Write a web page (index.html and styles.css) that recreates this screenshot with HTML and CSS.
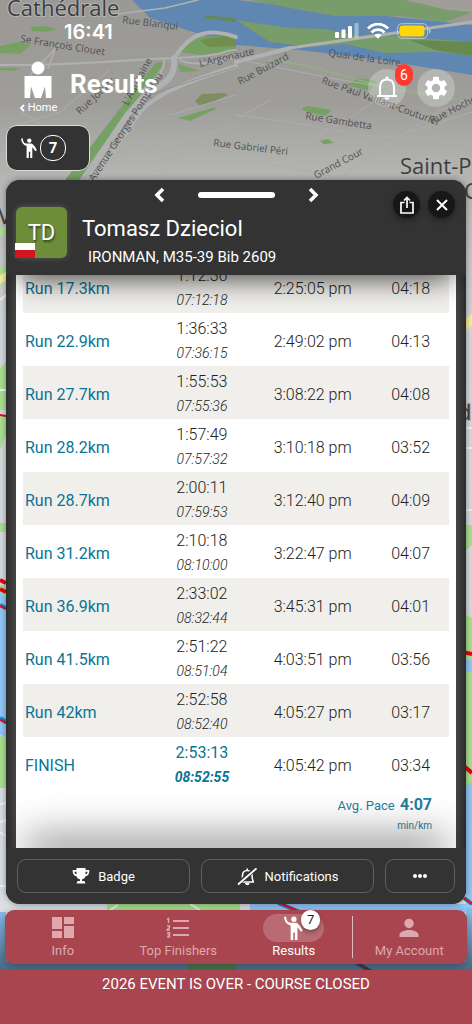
FILE: index.html
```html
<!DOCTYPE html>
<html lang="en">
<head>
<meta charset="utf-8">
<meta name="viewport" content="width=device-width, initial-scale=1">
<title>Results</title>
<link rel="stylesheet" href="styles.css">
</head>
<body>
<div class="app">
  <svg class="map" viewBox="0 0 472 1024" preserveAspectRatio="xMidYMin slice" aria-hidden="true">
    <defs>
      <linearGradient id="ground" x1="0" y1="0" x2="0" y2="1">
        <stop offset="0" stop-color="#9b9996"/><stop offset=".1" stop-color="#9e9d9a"/>
        <stop offset=".18" stop-color="#b7b8b5"/><stop offset=".32" stop-color="#d3d8dc"/>
        <stop offset="1" stop-color="#dbe0e4"/>
      </linearGradient>
      <linearGradient id="shade" x1="0" y1="0" x2="0" y2="1">
        <stop offset="0" stop-color="#1c2a38" stop-opacity="0"/><stop offset="1" stop-color="#1c2a38" stop-opacity=".6"/>
      </linearGradient>
    </defs>
    <rect width="472" height="1024" fill="url(#ground)"/>
    <path fill="#5f87b1" d="M132 0H236L472 25V75L380 60 300 50 236 45 190 31 150 18Z"/>
    <path fill="#789c6a" d="M251 0H472V12L445 22 400 16 335 16 290 8Z"/>
    <path fill="#a19d98" d="M405 0H472V12L447 10Z"/>
    <path fill="#789c6a" d="M236 20 290 28 325 29 360 36 372 34 420 38 472 42V56L440 52 385 53 345 44 310 47 270 42Z"/>
    <path fill="#67894f" d="M410 40 472 42V56L435 50ZM205 15 236 19V22L205 18Z"/>
    <g fill="#76a064">
      <path d="M31 27 45 26 58 29 45 32 32 31ZM0 46 18 42 31 45 20 54 0 53ZM0 68 20 68 14 71 0 70ZM178 52 198 37 236 35V52L200 55ZM178 64 200 71 180 72ZM178 118 212 108 218 108 190 121ZM302 108 308 106 332 110 325 116 304 111ZM320 141 328 139 334 143 324 144ZM346 85 358 78 376 81 370 91ZM62 184 78 184 122 120 165 62 157 62 145 76 88 150Z"/>
    </g>
    <path fill="#70843f" opacity=".65" d="M195 101 202 94 225 93 228 95 215 101 200 106ZM200 40 225 36 236 40V46L208 47Z"/>
    <g fill="none" stroke="#b0b1b2" stroke-linecap="round">
      <path stroke-width="2" d="M0 65C70 66 120 60 175 58S220 50 236 50"/>
      <path stroke-width="4" d="M174 58C180 50 188 38 202 34M236 62 290 48"/>
      <path stroke-width="6" d="M80 184 128 114 148 92C166 84 176 76 174 58"/>
      <path stroke-width="2" d="M140 92C152 82 164 74 164 61M180 60C190 66 210 64 236 58"/>
      <path stroke-width="4" d="M92 184 136 118C150 96 180 84 236 66"/>
      <path stroke-width="4" d="M202 34C212 31 226 33 236 37"/>
      <path stroke-width="3" d="M236 62 290 48 472 22"/>
      <path stroke-width="1.500" d="M110 15 165 8 198 0M30 75 55 49M48 68 55 49"/>
      <path stroke-width="1" stroke="#adadac" d="M0 130 60 112 110 70M20 112 48 128M150 150 236 125M170 115 236 95M160 175 200 130M110 160 150 145 175 170M236 115 290 122 360 135 472 142M270 100 240 117M310 140 350 118 390 90M340 178 400 135 472 112M380 150 440 110 472 100M250 160 330 175M240 60 330 78 472 102M420 115 440 140 472 145"/>
      <path stroke-width="2" stroke="#94ac88" d="M270 60C330 65 380 95 472 100"/>
    </g>
    <path fill="none" stroke="#919394" d="M86 184 132 115 150 95C176 86 200 78 236 67"/>
    <g class="map-street">
      <text transform="translate(122 23) rotate(7)">Rue Blanqui</text>
      <text transform="translate(20 42) rotate(9)">Se François Clouet</text>
      <text transform="translate(200 67) rotate(-13)">L'Argonaute</text>
      <text transform="translate(80 115) rotate(-43)">Rue Joliver</text>
      <text transform="translate(128 106) rotate(-62)">L'Aquitaine</text>
      <text transform="translate(94 182) rotate(-57)">Avenue Georges Pompidou</text>
      <text transform="translate(328 56) rotate(8)">Quai de la Loire</text>
      <text transform="translate(240 85) rotate(-28)">Rue Buizard</text>
      <text transform="translate(321 83) rotate(20)">Rue Paul Vaillant-Couturier</text>
      <text transform="translate(305 119) rotate(9)">Rue Gambetta</text>
      <text transform="translate(213 146) rotate(7)">Rue Gabriel Péri</text>
      <text transform="translate(316 179) rotate(-28)">Grand Cour</text>
      <text transform="translate(432 124) rotate(-27)">Rue Hoche</text>
    </g>
    <g class="map-town">
      <text x="7" y="16">Cathédrale</text>
      <text x="400" y="174">Saint-P</text>
      <text x="464" y="199">C</text>
      <text x="-2" y="224">V</text>
      <text x="458" y="420">d</text>
    </g>
    <path fill="#a9e08f" d="M0 229 6 226V232L0 236ZM0 268 6 264V278L0 286ZM0 368 6 362V410H0ZM0 416H6V434L0 450ZM0 523H6V532H0ZM0 585H6V595H0ZM0 735 6 738V788H0ZM466 525H472V545L466 550ZM466 615 472 618V786H466ZM107 904H240V912H107Z"/>
    <path fill="#f3ee9c" d="M0 275 6 272V280L0 284ZM466 318 472 314V326L466 330Z"/>
    <path fill="#91c6f7" d="M0 592 6 597V738L0 734ZM466 660H472V672H466ZM466 786 472 782V980H466ZM250 904H472V912H250ZM0 912H6V1024H0Z"/>
    <path fill="#87bce9" d="M0 912H6V980H0ZM466 908H472V980H466ZM0 962H472V980H0Z"/>
    <path fill="#7fc466" d="M185 962H236V974H190Z"/>
    <path fill="none" stroke="#e8000b" stroke-width="4" d="M0 580 6 583M0 589 6 592M462 652 472 654M464 766 472 773"/>
    <path fill="none" stroke="#1483c4" stroke-width="4" d="M0 605 6 608M0 718 6 722M464 898 472 904M278 903 300 912M355 962 375 974"/>
    <path fill="none" stroke="#e01020" stroke-width="2" d="M0 415 6 416M0 606 6 609M0 720 6 723M464 898 472 904M280 903 300 912M356 962 376 974"/>
    <path fill="none" stroke="#eef1f4" stroke-width="2" d="M0 300 6 295M0 390H6M0 804 6 803M0 822 6 820M0 832 6 836M0 886H6M110 910 118 905M190 904 200 910M466 428H472M466 448H472M466 510H472"/>
    <rect y="912" width="472" height="62" fill="url(#shade)"/>
  </svg>

  <div class="status">
    <span class="clock">16:41</span>
    <svg class="status-icons" width="96" height="18" viewBox="0 0 96 18" aria-hidden="true">
      <g fill="#fff"><rect y="9" width="4" height="6" rx="1"/><rect x="6.500" y="6.500" width="4" height="8.500" rx="1"/><rect x="13" y="3" width="4" height="12" rx="1"/><rect x="19.500" y="0" width="4" height="15" rx="1" opacity=".4"/></g>
      <g fill="none" stroke="#fff" stroke-width="2.800"><path d="M33 5.500C38.500-.3 47.500-.3 53 5.500M36.500 9.500C40 5.600 46 5.600 49.500 9.500"/></g>
      <path fill="#fff" d="M39.500 12.200C41.500 10.300 44.500 10.300 46.500 12.200L43 15.800Z"/>
      <rect x="62.500" y=".7" width="30" height="14.600" rx="4.500" fill="none" stroke="#d6d9dc" stroke-opacity=".75"/>
      <rect x="64.500" y="2.500" width="25" height="11" rx="3" fill="#ffd60a"/>
      <path fill="#d6d9dc" opacity=".8" d="M94 5.500C96 6 96 10 94 10.500Z"/>
    </svg>
  </div>

  <header class="topbar">
    <a class="home" href="#home">
      <svg width="28" height="38" viewBox="0 0 28 38" aria-hidden="true"><circle cx="14" cy="7" r="6.500" fill="#fff"/><path fill="#fff" d="M.5 15H27.500V37H22L21 25.500 17 37H11L7 25.500 6 37H.5Z"/></svg>
      <span class="home-label"><svg width="6" height="8" viewBox="0 0 6 8" aria-hidden="true"><path d="M5 1 2 4 5 7" fill="none" stroke="#fff" stroke-width="1.800"/></svg>Home</span>
    </a>
    <h1 class="title">Results</h1>
    <button class="round" type="button" aria-label="Alerts, 6 new">
      <svg width="22" height="24" viewBox="0 0 22 24" aria-hidden="true"><path fill="none" stroke="#fff" stroke-width="2.200" d="M1 20H21M4 20V11C4 6 7 3.500 11 3.500S18 6 18 11V20"/><path fill="#fff" d="M9.500 3.500V1.500C9.500 0 12.500 0 12.500 1.500V3.500ZM8.500 21.500H13.500C13.500 24.500 8.500 24.500 8.500 21.500Z"/></svg>
      <span class="alert-count">6</span>
    </button>
    <button class="round" type="button" aria-label="Settings">
      <svg width="28" height="28" viewBox="0 0 24 24" aria-hidden="true"><path fill="#fff" d="M19.140 12.940c.04-.3.060-.61.060-.94s-.02-.64-.07-.94l2.030-1.580a.49.49 0 0 0 .12-.61l-1.920-3.320a.49.49 0 0 0-.59-.22l-2.390.96a7 7 0 0 0-1.620-.94l-.36-2.540a.48.48 0 0 0-.48-.41h-3.840a.47.47 0 0 0-.47.41l-.36 2.540a7.400 7.400 0 0 0-1.620.94l-2.390-.96a.48.48 0 0 0-.59.22L2.740 8.870a.47.47 0 0 0 .12.610l2.030 1.580a7 7 0 0 0 0 1.880l-2.030 1.580a.49.49 0 0 0-.12.610l1.920 3.320c.12.220.37.290.59.220l2.390-.96c.5.380 1.030.7 1.620.94l.36 2.540c.05.240.24.410.48.410h3.840c.24 0 .44-.17.470-.41l.36-2.540a7.300 7.300 0 0 0 1.620-.94l2.390.96c.22.080.47 0 .59-.22l1.920-3.320a.47.47 0 0 0-.12-.61zM12 15.600a3.600 3.600 0 1 1 0-7.200 3.600 3.600 0 0 1 0 7.200z"/></svg>
    </button>
  </header>

  <button class="chip" type="button" aria-label="Tracked athletes: 7">
    <svg width="16" height="20" viewBox="0 0 16 20" aria-hidden="true"><use href="#athlete"/></svg>
    <span class="chip-count">7</span>
  </button>

  <main class="sheet">
    <div class="sheet-head">
      <div class="athlete">
        <div class="pager">
          <button class="plain" type="button" aria-label="Previous"><svg width="12" height="16" viewBox="0 0 12 16" aria-hidden="true"><path d="M10 2 4 8 10 14" fill="none" stroke="#fff" stroke-width="3.600"/></svg></button>
          <span class="handle"></span>
          <button class="plain" type="button" aria-label="Next"><svg width="12" height="16" viewBox="0 0 12 16" aria-hidden="true"><path d="M2 2 8 8 2 14" fill="none" stroke="#fff" stroke-width="3.600"/></svg></button>
        </div>
        <div class="profile">
          <div class="avatar">TD<span class="flag"></span></div>
          <div class="who">
            <h2 class="name">Tomasz Dzieciol</h2>
            <p class="division">IRONMAN, M35-39 Bib 2609</p>
          </div>
        </div>
      </div>
      <div class="actions">
        <button class="dark" type="button" aria-label="Share"><svg width="14" height="18" viewBox="0 0 14 18" aria-hidden="true"><path fill="none" stroke="#fff" stroke-width="1.700" d="M4.500 6.500H1V17H13V6.500H9.500M7 12V1.500M4 4.500 7 1.500 10 4.500"/></svg></button>
        <button class="dark" type="button" aria-label="Close"><svg width="12" height="12" viewBox="0 0 12 12" aria-hidden="true"><path fill="none" stroke="#fff" stroke-width="2" d="M1 1 11 11M11 1 1 11"/></svg></button>
      </div>
    </div>

    <div class="list">
      <table class="splits">
        <tbody>
          <tr><th scope="row">Run 17.3km</th><td>1:12:36<i>07:12:18</i></td><td>2:25:05 pm</td><td>04:18</td></tr>
          <tr><th scope="row">Run 22.9km</th><td>1:36:33<i>07:36:15</i></td><td>2:49:02 pm</td><td>04:13</td></tr>
          <tr><th scope="row">Run 27.7km</th><td>1:55:53<i>07:55:36</i></td><td>3:08:22 pm</td><td>04:08</td></tr>
          <tr><th scope="row">Run 28.2km</th><td>1:57:49<i>07:57:32</i></td><td>3:10:18 pm</td><td>03:52</td></tr>
          <tr><th scope="row">Run 28.7km</th><td>2:00:11<i>07:59:53</i></td><td>3:12:40 pm</td><td>04:09</td></tr>
          <tr><th scope="row">Run 31.2km</th><td>2:10:18<i>08:10:00</i></td><td>3:22:47 pm</td><td>04:07</td></tr>
          <tr><th scope="row">Run 36.9km</th><td>2:33:02<i>08:32:44</i></td><td>3:45:31 pm</td><td>04:01</td></tr>
          <tr><th scope="row">Run 41.5km</th><td>2:51:22<i>08:51:04</i></td><td>4:03:51 pm</td><td>03:56</td></tr>
          <tr><th scope="row">Run 42km</th><td>2:52:58<i>08:52:40</i></td><td>4:05:27 pm</td><td>03:17</td></tr>
          <tr class="finish"><th scope="row">FINISH</th><td>2:53:13<i>08:52:55</i></td><td>4:05:42 pm</td><td>03:34</td></tr>
        </tbody>
      </table>
      <div class="pace"><p class="pace-line">Avg. Pace <b>4:07</b></p><p class="pace-unit">min/km</p></div>
    </div>

    <div class="sheet-foot">
      <button class="outline" type="button"><svg width="18" height="18" viewBox="0 0 18 18" aria-hidden="true"><path fill="#fff" d="M4.500 1H13.500V9C13.500 11 11.500 12 10 12.300V14H12C13 14 13 16 13.500 16.500H4.500C5 16 5 14 6 14H8V12.300C6.500 12 4.500 11 4.500 9Z"/><path fill="none" stroke="#fff" stroke-width="1.700" d="M5 3.800H1.500C1.500 7 3 8.500 5.500 8.500M13 3.800H16.500C16.500 7 15 8.500 12.500 8.500"/></svg>Badge</button>
      <button class="outline" type="button"><svg width="20" height="19" viewBox="0 0 20 19" aria-hidden="true"><path fill="none" stroke="#fff" stroke-width="1.600" d="M3 15H17M5 15C5.500 13 5.500 11 5.500 8.500C5.500 5.500 7.500 3.500 10.200 3.500S15 5.500 15 8.500C15 11 15 12 16.500 15M10.200 3.500V1.500"/><path fill="#fff" d="M8 16H12.500C12.500 19 8 19 8 16Z"/><path fill="none" stroke="#333" stroke-width="4" d="M2.500 15.500 17 3"/><path fill="none" stroke="#fff" stroke-width="1.800" d="M1 17.500 19.500 1.500"/></svg>Notifications</button>
      <button class="outline more" type="button" aria-label="More"><svg width="16" height="6" viewBox="0 0 16 6" aria-hidden="true"><g fill="#fff"><circle cx="3" cy="3" r="2"/><circle cx="8" cy="3" r="2"/><circle cx="13" cy="3" r="2"/></g></svg></button>
    </div>
  </main>

  <nav class="tabs">
    <a class="tab" href="#info"><span class="tab-icon"><svg width="22" height="22" viewBox="0 0 22 22" aria-hidden="true"><path fill="currentColor" d="M0 0H10V12H0ZM12 0H22V7H12ZM12 9H22V21H12ZM0 14H10V21H0Z"/></svg></span>Info</a>
    <a class="tab" href="#top"><span class="tab-icon"><svg width="24" height="22" viewBox="0 0 24 22" aria-hidden="true"><path fill="none" stroke="currentColor" stroke-width="2" d="M7 4H23M7 11H23M7 18H23"/><path fill="none" stroke="currentColor" stroke-width="1.400" d="M1 2.500 2.500 1.500V6M1 9H3.500V10.500L1 13H4M1 15.700H3.500V20H1M1.500 17.800H3.500"/></svg></span>Top Finishers</a>
    <a class="tab active" href="#results" aria-current="page"><span class="tab-icon pill"><svg width="19" height="24" viewBox="0 0 16 20" aria-hidden="true"><g id="athlete" fill="#fff"><circle cx="8.300" cy="2.600" r="2.200"/><path d="M0 .8 1.700 .3C2 3.500 2.700 5 5 5.600H10.500C12.500 6.500 14.500 9 15.800 12.300L14.200 13.200C13.200 11.400 12.300 10.200 11.300 9.500V20H9.200V13.800H7.800V20H5.600V8C2 7 .5 4.500 0 .8Z"/></g></svg><span class="tab-count">7</span></span>Results</a>
    <a class="tab account" href="#account"><span class="tab-icon"><svg width="20" height="20" viewBox="0 0 20 20" aria-hidden="true"><circle cx="10" cy="5.500" r="4.700" fill="currentColor"/><path fill="currentColor" d="M.5 19V17C.5 13.500 6 12 10 12S19.500 13.500 19.500 17V19Z"/></svg></span>My Account</a>
  </nav>

  <footer class="notice">2026 EVENT IS OVER - COURSE CLOSED</footer>
</div>
</body>
</html>
```
FILE: styles.css
```css
* { box-sizing: border-box; }
body, h1, h2, p { margin: 0; }
body { font-family: Roboto, "Open Sans", sans-serif; color: #fff; }
button { font: inherit; color: inherit; border: 0; padding: 0; background: none; cursor: pointer; }
a { color: inherit; text-decoration: none; }
svg { display: block; flex: none; }

.app {
  position: relative;
  display: flex;
  flex-direction: column;
  height: 100vh;
  overflow: hidden;
}
.map { position: absolute; inset: 0; width: 100%; height: 100%; z-index: -1; }
.map-street { font-family: "Open Sans", sans-serif; font-size: 10px; fill: #505153; }
.map-town { font-family: "Open Sans", sans-serif; font-size: 22px; fill: #3c3d40; stroke: #b4b4b2; stroke-width: 2px; paint-order: stroke; }

.status {
  display: flex;
  justify-content: space-between;
  align-items: center;
  padding: 20px 41px 0 64px;
}
.clock { font: 600 20px/24px Inter, sans-serif; }

.topbar { display: flex; align-items: center; padding: 17px 17px 0 16px; }
.home { display: flex; flex-direction: column; align-items: center; gap: 2px; width: 44px; }
.home-label { display: flex; align-items: center; gap: 3px; font-size: 11px; line-height: 14px; }
.title { flex: 1; padding: 0 0 8px 10px; font-size: 26px; line-height: 32px; font-weight: 700; }
.round {
  position: relative;
  display: flex;
  align-items: center;
  justify-content: center;
  width: 38px;
  height: 38px;
  border-radius: 50%;
  background: rgba(255, 255, 255, .25);
}
.round + .round { margin-left: 11px; }
.alert-count {
  position: absolute;
  top: -5px;
  right: -7px;
  width: 18px;
  border-radius: 9px;
  background: #ff3b30;
  font-size: 14px;
  line-height: 22px;
}

.chip {
  display: flex;
  align-items: center;
  gap: 3px;
  align-self: flex-start;
  width: 84px;
  height: 46px;
  margin: 10px 0 9px 6px;
  padding-left: 14px;
  border: 1px solid #dcdcdc;
  border-radius: 11px;
  background: #333;
}
.chip-count {
  width: 26px;
  border: 1px solid #fff;
  border-radius: 12px;
  font-size: 15px;
  line-height: 24px;
  font-weight: 700;
}

.sheet {
  flex: 1;
  min-height: 0;
  display: flex;
  flex-direction: column;
  margin: 0 6px;
  border-radius: 14px;
  overflow: hidden;
  background: linear-gradient(90deg, #2c2c2c, #454545 10px, #454545 calc(100% - 10px), #2c2c2c);
  box-shadow: 0 0 6px rgba(0, 0, 0, .4);
}
.sheet-head, .sheet-foot { position: relative; z-index: 1; background: #333; }
.sheet-head { display: grid; padding-bottom: 5px; box-shadow: 0 14px 30px -12px rgba(0, 0, 0, .8); }
.athlete, .actions { grid-area: 1 / 1; }
.pager { display: flex; justify-content: center; align-items: center; gap: 33px; padding: 7px 0 4px; }
.plain { display: flex; }
.handle { width: 77px; height: 6px; border-radius: 3px; background: #fff; }
.profile { display: flex; align-items: flex-start; gap: 15px; padding-left: 10px; }
.avatar {
  position: relative;
  width: 51px;
  border-radius: 6px;
  background: #6d8d3b;
  box-shadow: 0 0 6px rgba(255, 255, 255, .2);
  font-size: 22px;
  line-height: 51px;
  text-align: center;
  text-shadow: 1px 2px 2px rgba(0, 0, 0, .5);
}
.flag {
  position: absolute;
  left: -1px;
  bottom: 0;
  width: 20px;
  height: 15px;
  background: linear-gradient(#fff 50%, #d4141e 50%);
}
.who { padding-top: 7px; }
.name { font-size: 22px; line-height: 30px; font-weight: 400; }
.division { padding-left: 6px; font-size: 15px; line-height: 26px; }
.actions { display: flex; gap: 8px; justify-self: end; align-self: start; padding: 11px 11px 0 0; }
.dark {
  display: flex;
  align-items: center;
  justify-content: center;
  width: 27px;
  height: 27px;
  border-radius: 50%;
  background: #171717;
  box-shadow: 0 2px 6px rgba(0, 0, 0, .4);
}

.list {
  flex: 1;
  min-height: 0;
  display: flex;
  flex-direction: column;
  justify-content: flex-end;
  margin: 0 10px;
  padding: 0 7px 15px;
  overflow: hidden;
  background: #fff;
  color: #222;
}
.splits { width: 100%; border-collapse: collapse; table-layout: fixed; font-size: 16px; line-height: 25px; }
.splits tr:nth-child(odd) { background: #f0efeb; }
.splits th, .splits td { height: 53px; padding: 3px 0 0; font-weight: 300; text-align: center; }
.splits th { width: 30%; padding-left: 2px; text-align: left; color: #0a7496; font-weight: 400; }
.splits td:nth-child(2) { width: 24%; }
.splits td:nth-child(3) { width: 28%; }
.splits i { display: block; font-size: 14px; }
.finish td:nth-child(2) { color: #0a7496; font-weight: 400; }
.finish i { font-weight: 700; }
.pace { padding: 2px 17px 0 0; text-align: right; color: #1f819f; }
.pace-line { font-size: 13px; line-height: 26px; }
.pace-line b { padding-left: 2px; font-size: 16px; }
.pace-unit { font-size: 10px; line-height: 14px; }

.sheet-foot {
  display: flex;
  gap: 11px;
  padding: 11px;
  box-shadow: 0 -26px 40px -20px rgba(0, 0, 0, .8);
}
.outline {
  flex: 1;
  display: flex;
  align-items: center;
  justify-content: center;
  gap: 8px;
  height: 34px;
  border: 1px solid #606060;
  border-radius: 9px;
  font-size: 13px;
}
.more { flex: 0 0 70px; }

.tabs {
  display: grid;
  grid-template-columns: repeat(4, 1fr);
  margin: 6px 5px;
  border-radius: 9px;
  background: #a8454f;
  box-shadow: 0 2px 8px rgba(0, 0, 0, .3);
}
.tab {
  display: flex;
  flex-direction: column;
  align-items: center;
  padding: 4px 0;
  font-size: 13px;
  line-height: 18px;
  color: #dda9ae;
}
.tab-icon { position: relative; display: flex; align-items: center; justify-content: center; width: 61px; height: 28px; }
.active { color: #fff; }
.pill { border-radius: 14px; background: rgba(255, 255, 255, .2); }
.tab-count {
  position: absolute;
  top: -4px;
  right: 4px;
  width: 19px;
  border-radius: 10px;
  background: #fff;
  box-shadow: 0 2px 5px rgba(0, 0, 0, .4);
  color: #222;
  text-align: center;
  line-height: 20px;
}
.account { background: linear-gradient(#e3bcc0, #e3bcc0) left center / 1px 42px no-repeat; }

.notice {
  padding: 4px 0 30px;
  background: #a8454f;
  font-size: 15px;
  line-height: 20px;
  text-align: center;
}
```
